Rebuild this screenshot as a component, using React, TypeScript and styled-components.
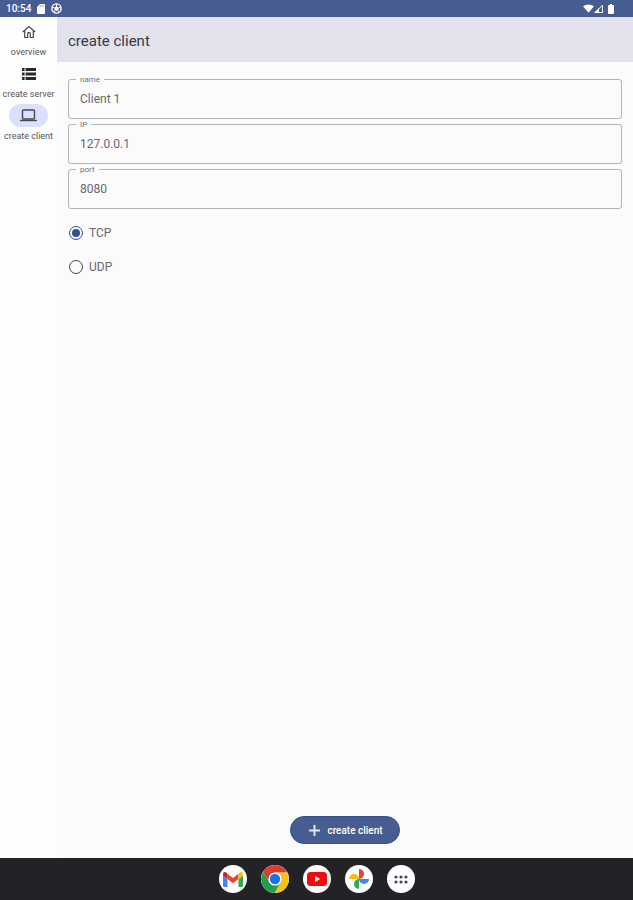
import React, { useId, useState } from "react";
import styled, { createGlobalStyle } from "styled-components";

const GlobalStyle = createGlobalStyle`
  *, *::before, *::after { box-sizing: border-box; }
  body { margin: 0; background: #fbfbfc; color: #55555b; font-family: Roboto, "Noto Sans", sans-serif; }
  button, input { font: inherit; color: inherit; }
`;

const Screen = styled.div`
  min-height: 100vh;
  display: flex;
  flex-direction: column;
`;

const StatusBar = styled.header`
  display: flex;
  align-items: center;
  justify-content: space-between;
  height: 17px;
  padding: 0 19px 0 6px;
  background: #475d92;
  color: #fff;
  font-size: 10px;
  font-weight: 500;
  line-height: 17px;
`;

const StatusGroup = styled.div<{ $gap: number }>`
  display: flex;
  align-items: center;
  gap: ${(p) => p.$gap}px;
  svg { display: block; }
`;

const Body = styled.div`
  flex: 1;
  display: flex;
`;

const Rail = styled.nav`
  flex: 0 0 57px;
  display: flex;
  flex-direction: column;
  gap: 5px;
  padding-top: 3px;
  background: #fefefe;
`;

const RailButton = styled.button`
  display: flex;
  flex-direction: column;
  align-items: center;
  gap: 4px;
  padding: 0;
  border: 0;
  background: none;
  font-size: 9px;
  line-height: 10px;
  white-space: nowrap;
  cursor: pointer;
`;

const Indicator = styled.span<{ $active: boolean }>`
  display: flex;
  align-items: center;
  justify-content: center;
  width: 39px;
  height: 23px;
  border-radius: 12px;
  background: ${(p) => (p.$active ? "#dbe0fd" : "transparent")};
`;

const Main = styled.main`
  flex: 1;
  min-width: 0;
  display: flex;
  flex-direction: column;
`;

const TitleBar = styled.div`
  display: flex;
  align-items: center;
  height: 45px;
  padding: 2px 11px 0;
  background: #e1e2ec;
`;

const Title = styled.h1`
  margin: 0;
  font-size: 15px;
  font-weight: 400;
  line-height: 20px;
  color: #38393f;
`;

const Form = styled.form`
  flex: 1;
  display: flex;
  flex-direction: column;
  padding: 17px 11px 14px;
`;

const Fields = styled.div`
  display: flex;
  flex-direction: column;
  gap: 5px;
`;

const FieldBox = styled.div`
  position: relative;
`;

const FieldLabel = styled.label`
  position: absolute;
  top: -4px;
  left: 8px;
  padding: 0 4px;
  background: #fbfbfc;
  font-size: 8px;
  line-height: 10px;
  color: #707076;
`;

const FieldInput = styled.input`
  display: block;
  width: 100%;
  height: 40px;
  padding: 0 11px;
  border: 1px solid #b4b4b8;
  border-radius: 3px;
  background: transparent;
  font-size: 12px;
  color: #68686d;
  outline: none;
  &:focus-visible { border-color: #475d92; }
`;

const Choices = styled.div`
  display: flex;
  flex-direction: column;
  align-items: flex-start;
  gap: 18px;
  padding: 16px 1px;
`;

const Choice = styled.label`
  display: flex;
  align-items: center;
  gap: 6px;
  font-size: 12px;
  line-height: 16px;
  color: #68686d;
`;

const Radio = styled.input`
  appearance: none;
  display: grid;
  place-items: center;
  width: 14px;
  height: 14px;
  margin: 0;
  border: 1px solid #46464c;
  border-radius: 50%;
  &:checked { border-color: #35508c; }
  &:checked::before {
    content: "";
    width: 8px;
    height: 8px;
    border-radius: 50%;
    background: #35508c;
  }
`;

const SubmitButton = styled.button`
  display: flex;
  align-items: center;
  gap: 7px;
  height: 28px;
  margin: auto auto 0;
  padding: 0 16px 0 18px;
  border: 1px solid #34508f;
  border-radius: 14px;
  background: #475d92;
  color: #fff;
  font-size: 10px;
  font-weight: 500;
  cursor: pointer;
`;

const Dock = styled.footer`
  display: flex;
  align-items: center;
  justify-content: center;
  gap: 14px;
  height: 42px;
  background: #232327;
`;

const DockButton = styled.button`
  display: grid;
  place-items: center;
  width: 28px;
  height: 28px;
  padding: 0;
  border: 0;
  border-radius: 50%;
  background: #fff;
  overflow: hidden;
  cursor: pointer;
  svg { display: block; }
`;

const HomeIcon = () => (
  <svg width="14" height="14" viewBox="0 0 14 14" fill="none" stroke="#46464c" strokeWidth="1.2">
    <path d="M.8 7 7 1.600 13.200 7M2.700 5.600v6.900h3V8.600a1.300 1.300 0 0 1 2.600 0v3.900h3V5.600" />
  </svg>
);

const ListIcon = () => (
  <svg width="14" height="12" viewBox="0 0 14 12" fill="#29292e">
    <path d="M0 0h2.6v3H0zM3.6 0H14v3H3.6zM0 4.5h2.6v3H0zM3.6 4.5H14v3H3.6zM0 9h2.6v3H0zM3.6 9H14v3H3.6z" />
  </svg>
);

const LaptopIcon = () => (
  <svg width="17" height="13" viewBox="0 0 17 13" fill="none" stroke="#46464c" strokeWidth="1.4">
    <rect x="2.500" y="1" width="12" height="9" rx="1" />
    <path d="M0 11.500h17" />
  </svg>
);

const StorageIcon = () => (
  <svg width="8" height="10" viewBox="0 0 8 10">
    <path fill="#fff" d="M3 0h4q1 0 1 1v8q0 1-1 1H1Q0 10 0 9V3z" />
    <path stroke="#8796bd" strokeWidth=".8" d="M3.3 1.3v1.6M4.9 1.3v1.6M6.5 1.3v1.6" />
  </svg>
);

const BallIcon = () => (
  <svg width="11" height="11" viewBox="0 0 11 11" fill="none" stroke="#fff">
    <circle cx="5.500" cy="5.500" r="4.600" strokeWidth="1.400" />
    <path fill="#fff" strokeWidth=".7" d="m5.500 3.600 2 1.300-.7 2.400H4.200l-.7-2.400z" />
    <path d="M5.500 3.600V1M7.500 5l2-1M6.800 7.300l1.300 1.800M4.200 7.300 2.900 9.100M3.500 5l-2-1" />
  </svg>
);

const WifiIcon = () => (
  <svg width="11" height="9" viewBox="0 0 12 9">
    <path fill="#fff" d="M0 2.100Q6-2 12 2.100L6 9z" />
  </svg>
);

const SignalIcon = () => (
  <svg width="9" height="9" viewBox="0 0 9 9">
    <path fill="none" stroke="#fff" d="M1.200 8.500h7.300V1.200z" />
    <path fill="#fff" d="M0 9h5V4z" />
  </svg>
);

const BatteryIcon = () => (
  <svg width="6" height="10" viewBox="0 0 6 10">
    <path fill="#fff" d="M2 0h2v1h1q1 0 1 1v7q0 1-1 1H1Q0 10 0 9V2q0-1 1-1h1z" />
  </svg>
);

const PlusIcon = () => (
  <svg width="11" height="11" viewBox="0 0 11 11" stroke="#dfe4f1" strokeWidth="2">
    <path d="M5.500 0v11M0 5.500h11" />
  </svg>
);

const GmailIcon = () => (
  <svg width="20" height="15" viewBox="0 0 20 15">
    <path fill="#4285f4" d="M0 3.500 4.500 7v8h-3Q0 15 0 13.500z" />
    <path fill="#34a853" d="M15.500 7 20 3.500v10q0 1.500-1.500 1.500h-3z" />
    <path fill="#ea4335" d="M4.500 1.800 10 6l5.500-4.200V7L10 11.200 4.500 7z" />
    <path fill="#c5221f" d="M0 2.200Q0 0 2 0q1 0 2.500 1.800V7L0 3.600z" />
    <path fill="#fbbc04" d="M20 2.200Q20 0 18 0q-1 0-2.500 1.800V7L20 3.600z" />
  </svg>
);

const ChromeIcon = () => (
  <svg width="28" height="28" viewBox="0 0 28 28">
    <path fill="#df3b2f" d="M14 7.500h12.400A14 14 0 0 0 1.900 7l6.300 10.300z" />
    <path fill="#fbc116" d="M14 7.500h12.400A14 14 0 0 1 13.600 28l6-10.500z" />
    <path fill="#229f4b" d="m19.600 17.300-6 10.700A14 14 0 0 1 1.900 7l6.400 10.300z" />
    <circle cx="14" cy="14" r="6.600" fill="#fff" />
    <circle cx="14" cy="14" r="5.200" fill="#1a73e8" />
  </svg>
);

const YoutubeIcon = () => (
  <svg width="20" height="14" viewBox="0 0 20 14">
    <rect width="20" height="14" rx="3.500" fill="#f50a0a" />
    <path fill="#fff" d="m8 4 5.200 3L8 10z" />
  </svg>
);

const PhotosIcon = () => (
  <svg width="22" height="22" viewBox="0 0 22 22">
    <path fill="#ea4335" d="M11 1a5 5 0 0 1 5 5 5 5 0 0 1-5 5z" />
    <path fill="#4285f4" d="M21 11a5 5 0 0 1-10 0z" />
    <path fill="#34a853" d="M11 21a5 5 0 0 1 0-10z" />
    <path fill="#fbbc04" d="M1 11a5 5 0 0 1 10 0z" />
  </svg>
);

const AppsIcon = () => (
  <svg width="14" height="9" viewBox="0 0 14 9" fill="#42405f">
    {[2, 7, 12].map((x) =>
      [2, 7].map((y) => <circle key={`${x}-${y}`} cx={x} cy={y} r="1.600" />)
    )}
  </svg>
);

const pages = [
  { name: "overview", Icon: HomeIcon },
  { name: "create server", Icon: ListIcon },
  { name: "create client", Icon: LaptopIcon },
];

const apps = [
  { name: "Gmail", Icon: GmailIcon },
  { name: "Chrome", Icon: ChromeIcon },
  { name: "YouTube", Icon: YoutubeIcon },
  { name: "Photos", Icon: PhotosIcon },
  { name: "All apps", Icon: AppsIcon },
];

function TextField({ label, initial }: { label: string; initial: string }) {
  const id = useId();
  const [value, setValue] = useState(initial);
  return (
    <FieldBox>
      <FieldInput id={id} value={value} onChange={(e) => setValue(e.target.value)} />
      <FieldLabel htmlFor={id}>{label}</FieldLabel>
    </FieldBox>
  );
}

export default function App() {
  const [page, setPage] = useState("create client");
  const [protocol, setProtocol] = useState("TCP");

  return (
    <Screen>
      <GlobalStyle />
      <StatusBar>
        <StatusGroup $gap={6}>
          <span>10:54</span>
          <StorageIcon />
          <BallIcon />
        </StatusGroup>
        <StatusGroup $gap={5}>
          <StatusGroup $gap={0}>
            <WifiIcon />
            <SignalIcon />
          </StatusGroup>
          <BatteryIcon />
        </StatusGroup>
      </StatusBar>
      <Body>
        <Rail>
          {pages.map(({ name, Icon }) => (
            <RailButton key={name} type="button" onClick={() => setPage(name)}>
              <Indicator $active={page === name}>
                <Icon />
              </Indicator>
              {name}
            </RailButton>
          ))}
        </Rail>
        <Main>
          <TitleBar>
            <Title>create client</Title>
          </TitleBar>
          <Form onSubmit={(e) => e.preventDefault()}>
            <Fields>
              <TextField label="name" initial="Client 1" />
              <TextField label="IP" initial="127.0.0.1" />
              <TextField label="port" initial="8080" />
            </Fields>
            <Choices role="radiogroup" aria-label="protocol">
              {["TCP", "UDP"].map((name) => (
                <Choice key={name}>
                  <Radio
                    type="radio"
                    name="protocol"
                    checked={protocol === name}
                    onChange={() => setProtocol(name)}
                  />
                  {name}
                </Choice>
              ))}
            </Choices>
            <SubmitButton type="submit">
              <PlusIcon />
              create client
            </SubmitButton>
          </Form>
        </Main>
      </Body>
      <Dock>
        {apps.map(({ name, Icon }) => (
          <DockButton key={name} type="button" aria-label={name}>
            <Icon />
          </DockButton>
        ))}
      </Dock>
    </Screen>
  );
}
